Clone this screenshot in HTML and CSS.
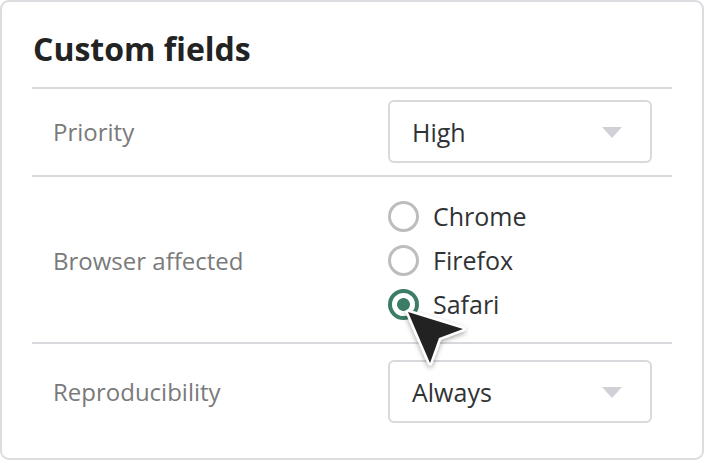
FILE: index.html
```html
<!DOCTYPE html>
<html>
<head>
<meta charset="utf-8">
<link rel="stylesheet" href="styles.css">
</head>
<body>
<div class="card">
  <div class="title">Custom fields</div>
  <div class="row row-priority">
    <div class="label">Priority</div>
    <div class="select"><span>High</span><span class="caret"></span></div>
  </div>
  <div class="row row-browser">
    <div class="label">Browser affected</div>
    <div class="radios">
      <div class="option"><span class="radio"></span><span>Chrome</span></div>
      <div class="option"><span class="radio"></span><span>Firefox</span></div>
      <div class="option"><span class="radio checked"></span><span>Safari</span></div>
    </div>
  </div>
  <div class="row row-repro">
    <div class="label">Reproducibility</div>
    <div class="select"><span>Always</span><span class="caret"></span></div>
  </div>
  <svg class="cursor" width="90" height="80" viewBox="0 0 90 80">
    <defs>
      <filter id="sh" x="-30%" y="-30%" width="160%" height="160%">
        <feDropShadow dx="0" dy="2" stdDeviation="2.5" flood-color="#000" flood-opacity="0.35"/>
      </filter>
    </defs>
    <polygon points="13,14 68,31 44,40 35,65" fill="#222" stroke="#fff" stroke-width="5" stroke-linejoin="round" filter="url(#sh)"/>
    <polygon points="13,14 68,31 44,40 35,65" fill="#222"/>
  </svg>
</div>
</body>
</html>
```
FILE: styles.css
```css
html, body {
  margin: 0;
  padding: 0;
  background: #fff;
}
body {
  font-family: "Open Sans", "Liberation Sans", sans-serif;
}
.card {
  position: relative;
  box-sizing: border-box;
  width: 704px;
  height: 460px;
  border: 2px solid #dcdce1;
  border-radius: 9px;
  padding: 0 30px;
  overflow: hidden;
}
.title {
  height: 87px;
  box-sizing: border-box;
  padding: 26px 0 0 1px;
  font-size: 32px;
  font-weight: 700;
  line-height: 42px;
  color: #232323;
  border-bottom: 2px solid #d8d8dd;
}
.row {
  display: grid;
  grid-template-columns: 356px 264px;
  align-items: center;
  border-bottom: 2px solid #d8d8dd;
}
.row-priority {
  padding: 11px 0 12px;
}
.row-browser {
  padding: 17px 0 16px;
}
.row-repro {
  padding: 16px 0 0;
  border-bottom: none;
}
.label {
  padding-left: 21px;
  font-size: 24px;
  color: #7a7a7a;
}
.select {
  box-sizing: border-box;
  height: 63px;
  border: 2px solid #d8d8dd;
  border-radius: 6px;
  display: flex;
  align-items: center;
  justify-content: space-between;
  padding: 0 28px 0 22px;
  font-size: 25px;
  color: #2f3335;
}
.caret {
  width: 0;
  height: 0;
  border-left: 10.5px solid transparent;
  border-right: 10.5px solid transparent;
  border-top: 11px solid #d0d0d6;
  margin-top: 2px;
}
.radios {
  display: flex;
  flex-direction: column;
}
.option {
  height: 44px;
  display: flex;
  align-items: center;
  gap: 14px;
  font-size: 25px;
  color: #2f3335;
}
.radio {
  box-sizing: border-box;
  width: 31px;
  height: 31px;
  border-radius: 50%;
  border: 3px solid #bdbdbd;
  background: #fff;
  flex: none;
}
.radio.checked {
  border: 4px solid #3b7d68;
  background: radial-gradient(circle, #3b7d68 0 6px, #fff 6.8px);
}
.cursor {
  position: absolute;
  left: 393px;
  top: 296px;
}
```
